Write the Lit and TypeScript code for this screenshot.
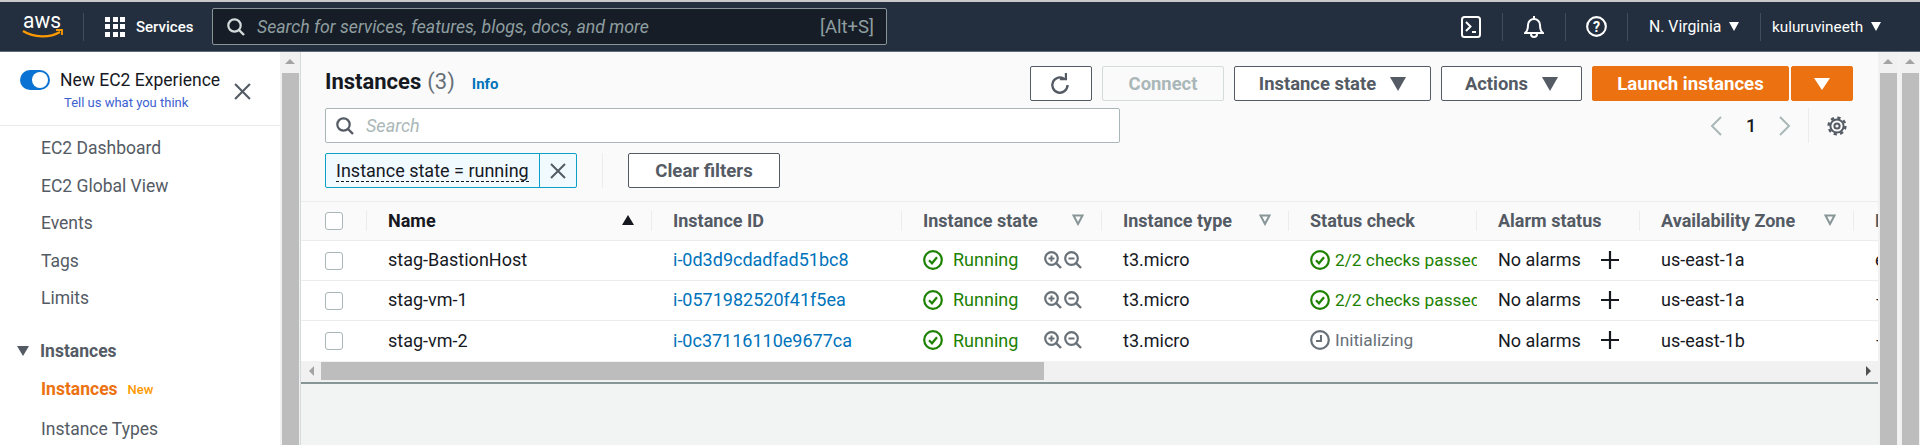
import { LitElement, html, css } from "lit";
import { customElement } from "lit/decorators.js";

const check = html`<svg class="st" viewBox="0 0 20 20"><circle cx="10" cy="10" r="8.8" fill="none" stroke="#1d8102" stroke-width="2.2"/><path d="M6 10.3l3 3 5-6" fill="none" stroke="#1d8102" stroke-width="2.2"/></svg>`;
const clock = html`<svg class="st" viewBox="0 0 20 20"><circle cx="10" cy="10" r="8.8" fill="none" stroke="#687078" stroke-width="2.2"/><path d="M11 5v6H6" fill="none" stroke="#687078" stroke-width="2"/></svg>`;
const zoomIn = html`<svg class="zi" viewBox="0 0 18 18"><circle cx="7.5" cy="7.5" r="6.3" fill="none" stroke="#687078" stroke-width="2.2"/><path d="M12 12l5 5" stroke="#687078" stroke-width="2.4"/><path d="M4.5 7.5h6M7.5 4.5v6" stroke="#687078" stroke-width="2"/></svg>`;
const zoomOut = html`<svg class="zi" viewBox="0 0 18 18"><circle cx="7.5" cy="7.5" r="6.3" fill="none" stroke="#687078" stroke-width="2.2"/><path d="M12 12l5 5" stroke="#687078" stroke-width="2.4"/><path d="M4.5 7.5h6" stroke="#687078" stroke-width="2"/></svg>`;
const plus = html`<svg class="plus" viewBox="0 0 20 20"><path d="M10 1v18M1 10h18" stroke="#16191f" stroke-width="2.2"/></svg>`;
const filt = html`<svg class="filt" viewBox="0 0 12 12"><path d="M1.5 1.5h9L6 10z" fill="none" stroke="#879596" stroke-width="2"/></svg>`;
const caret = (c: string, w: number, h: number) => html`<svg width=${w} height=${h} viewBox="0 0 16 14" preserveAspectRatio="none"><path d="M0 0h16L8 14z" fill=${c}/></svg>`;
const searchIcon = (c: string) => html`<svg width="18" height="18" viewBox="0 0 18 18"><circle cx="7.5" cy="7.5" r="6.2" fill="none" stroke=${c} stroke-width="2.2"/><path d="M12 12l5 5" stroke=${c} stroke-width="2.4"/></svg>`;
const cross = (s: number) => html`<svg width=${s} height=${s} viewBox="0 0 16 16"><path d="M1 1l14 14M15 1L1 15" stroke="#545b64" stroke-width="2"/></svg>`;

const rows = [
  { n: "stag-BastionHost", id: "i-0d3d9cdadfad51bc8", ok: true, az: "us-east-1a", last: "e" },
  { n: "stag-vm-1", id: "i-0571982520f41f5ea", ok: true, az: "us-east-1a", last: "–" },
  { n: "stag-vm-2", id: "i-0c37116110e9677ca", ok: false, az: "us-east-1b", last: "–" },
];
const nav = ["EC2 Dashboard", "EC2 Global View", "Events", "Tags", "Limits"];

@customElement("app-root")
export class AppRoot extends LitElement {
  static styles = css`
    :host { display: block; width: 1920px; height: 445px; overflow: hidden; font-family: Roboto, "Noto Sans", sans-serif; font-size: 18px; color: #16191f; background: #f2f3f3; }
    * { box-sizing: border-box; }
    .top { height: 52px; background: #232f3e; border-top: 2px solid #c9c9c9; border-bottom: 1px solid #5f6b7a; display: flex; align-items: center; color: #fff; }
    .logo { width: 83px; padding-left: 22px; display: flex; }
    .logo svg { overflow: visible; }
    .vsep { width: 1px; height: 28px; background: #414d5c; }
    .grid { margin-left: 21px; width: 20px; height: 20px; display: grid; grid-template-columns: repeat(3, 5px); grid-template-rows: repeat(3, 5px); gap: 2.5px; }
    .grid i { background: #fff; }
    .svc { margin-left: 11px; font-size: 15px; font-weight: 500; width: 76px; }
    .gs { width: 675px; height: 37px; margin-right: auto; background: #161d26; border: 1px solid #879596; border-radius: 2px; display: flex; align-items: center; padding: 0 12px 0 14px; color: #8f9ea0; font-size: 17.7px; }
    .gs em { margin-left: 12px; flex: 1; }
    .gs span { font-size: 18.5px; }
    .ti { width: 62.5px; height: 28px; display: flex; align-items: center; justify-content: center; border-right: 1px solid #414d5c; }
    .reg { display: flex; align-items: center; height: 28px; font-size: 15.8px; padding-left: 21px; gap: 8px; }
    .reg.a { width: 133px; border-right: 1px solid #414d5c; }
    .reg.b { width: 159px; padding-left: 11px; font-size: 15.3px; }
    .main { display: flex; height: 393px; }
    .side { width: 280px; background: #fff; flex: none; overflow: hidden; }
    .exp { height: 74px; border-bottom: 1px solid #eaeded; display: flex; padding: 18px 0 0 20px; }
    .tog { width: 30px; height: 20px; border-radius: 10px; background: #0972d3; padding: 2px; display: flex; justify-content: flex-end; flex: none; }
    .tog i { width: 16px; height: 16px; border-radius: 50%; background: #fff; }
    .exp b { font-weight: 400; font-size: 17.5px; line-height: 20px; color: #16191f; display: block; white-space: nowrap; }
    .exp a { font-size: 13px; line-height: 16px; color: #3d5fd0; display: block; margin: 5px 0 0 4px; white-space: nowrap; }
    .expt { margin-left: 10px; }
    .cl { margin: 13px 0 0 14px; flex: none; }
    .nav { padding: 3.5px 0 0 41px; color: #545b64; font-size: 17.5px; }
    .nav div { height: 37.5px; display: flex; align-items: center; white-space: nowrap; }
    .nav .sect { margin: 15px 0 0 -24px; font-weight: 700; gap: 11px; }
    .nav .act { color: #ec7211; font-weight: 700; gap: 10px; margin-top: 1px; }
    .nav .ty { margin-top: 2px; }
    .act small { font-size: 13px; font-weight: 500; color: #ff9900; }
    .vs { width: 20px; background: #f1f1f1; flex: none; display: flex; flex-direction: column; }
    .vs .tr { height: 21px; display: flex; justify-content: center; padding-top: 7px; flex: none; }
    .vs .tr i { width: 0; height: 0; border: 5px solid transparent; border-top: 0; border-bottom: 5px solid #a3a3a3; }
    .vs .th { flex: 1; background: #bdbdbd; margin: 0 1px 0 2px; }
    .vs2 { margin-left: 2px; }
    .content { width: 1578px; flex: none; border-left: 1px solid #d5dbdb; }
    .panel { background: #fafafa; padding: 14px 25px 0 24px; height: 149px; }
    .r1 { display: flex; align-items: center; height: 35px; }
    .tt { display: flex; align-items: baseline; font-size: 22px; font-weight: 700; margin-top: -4px; }
    .tt span { font-weight: 400; color: #687078; margin-left: 6px; }
    .tt a { font-size: 15px; color: #0073bb; font-weight: 700; margin-left: 17px; }
    .acts { display: flex; margin-left: auto; gap: 10px; }
    .btn { height: 35px; border: 1px solid #545b64; border-radius: 2px; background: #fff; color: #545b64; font-weight: 700; font-size: 18.4px; display: flex; align-items: center; justify-content: center; gap: 14px; white-space: nowrap; }
    .b-ref { width: 62px; }
    .b-con { width: 122px; border-color: #d5dbdb; color: #aab7b8; background: #fafafa; }
    .b-st { width: 197px; }
    .b-ac { width: 141px; }
    .split { display: flex; gap: 2px; }
    .b-la { width: 197px; background: #ec7211; border-color: #ec7211; color: #fff; font-size: 18.6px; }
    .b-dr { width: 62px; background: #ec7211; border-color: #ec7211; }
    .b-cl { width: 152px; font-size: 18.6px; }
    .r2 { display: flex; height: 35px; margin-top: 7px; align-items: center; }
    .sb { width: 795px; height: 35px; background: #fff; border: 1px solid #aab7b8; border-radius: 2px; display: flex; align-items: center; padding-left: 10px; color: #aab7b8; font-style: italic; gap: 12px; }
    .pg { margin-left: auto; margin-right: 6px; height: 35px; display: flex; align-items: center; }
    .pg b { width: 26px; font-weight: 500; text-align: center; margin: 0 15px 0 16px; }
    .pg .gsep { width: 1px; height: 35px; background: #eaeded; margin: 0 18px 0 17px; }
    .r3 { display: flex; height: 35px; margin-top: 10px; align-items: center; }
    .chip { height: 35px; width: 252px; background: #f1faff; border: 1px solid #0aa0c8; border-radius: 2px; display: flex; align-items: center; white-space: nowrap; }
    .chip span { padding-left: 10px; width: 213px; flex: none; }
    .chip u { text-decoration: none; border-bottom: 1px dashed #16191f; }
    .chip i { flex: 1; height: 100%; border-left: 1px solid #0aa0c8; display: flex; align-items: center; justify-content: center; }
    .fsep { width: 1px; height: 35px; background: #eaeded; margin: 0 25px; }
    .table { width: 1577px; overflow: hidden; }
    .tr-h, .tr-b { display: grid; grid-template-columns: 66px 285px 250px 200px 187px 188px 163px 214px 24px; }
    .tr-h { height: 40px; background: #fafafa; border-top: 1px solid #eaeded; border-bottom: 1px solid #eaeded; font-weight: 700; color: #545b64; }
    .tr-b { height: 40px; background: #fff; border-bottom: 1px solid #eaeded; }
    .tr-b:last-of-type { border-bottom: 0; }
    .c { display: flex; align-items: center; padding: 0 20px 2px 21px; white-space: nowrap; overflow: hidden; min-width: 0; }
    .tr-h .c { justify-content: space-between; padding-right: 18px; position: relative; }
    .tr-h .c::after { content: ""; position: absolute; right: 0; top: 9px; bottom: 9px; width: 1px; background: #eaeded; }
    .tr-h .c.nm { color: #16191f; }
    .tr-h .c.last { padding-right: 0; }
    .tr-h .c.last::after { display: none; }
    .c.c0 { padding: 0 0 0 24px; }
    .cb { width: 18px; height: 18px; border: 1px solid #aab7b8; border-radius: 3px; background: #fff; flex: none; }
    .link { color: #0073bb; }
    .g { color: #1d8102; }
    .gr { color: #687078; }
    .st { width: 20px; height: 20px; flex: none; margin-right: 10px; }
    .c.chk { padding-right: 0; font-size: 17.3px; }
    .chk .st { margin-right: 5px; }
    .zs { margin-left: auto; display: flex; gap: 2px; }
    .zi { width: 18px; height: 18px; flex: none; }
    .plus { width: 20px; height: 20px; margin-left: auto; flex: none; }
    .filt { width: 12px; height: 12px; flex: none; }
    .tri { flex: none; }
    .hs { height: 23px; background: #f1f1f1; display: flex; align-items: center; border-bottom: 2px solid #879596; padding-bottom: 1px; }
    .hs .ta { width: 20px; display: flex; justify-content: center; }
    .hs .th { width: 723px; height: 18px; background: #bdbdbd; }
    .hs .sp { flex: 1; }
    .tri-l { width: 0; height: 0; border: 5px solid transparent; border-left: 0; border-right: 5px solid #a3a3a3; }
    .tri-r { width: 0; height: 0; border: 5px solid transparent; border-right: 0; border-left: 5px solid #505050; }
  `;

  render() {
    return html`
      <div class="top">
        <div class="logo"><svg width="42" height="26" viewBox="0 0 42 26"><text x="1" y="14" font-family="Roboto" font-size="22" textLength="38" lengthAdjust="spacingAndGlyphs" fill="#fff">aws</text><path d="M1 17c11 7 27 7 37 1" fill="none" stroke="#f90" stroke-width="2.2"/><path d="M34 16h6v5" fill="none" stroke="#f90" stroke-width="1.8"/></svg></div>
        <div class="vsep"></div>
        <div class="grid">${Array(9).fill(0).map(() => html`<i></i>`)}</div>
        <div class="svc">Services</div>
        <div class="gs">${searchIcon("#d5dbdb")}<em>Search for services, features, blogs, docs, and more</em><span>[Alt+S]</span></div>
        <div class="ti"><svg width="20" height="24" viewBox="0 0 20 24"><rect x="1" y="2" width="18" height="20" rx="2.5" fill="none" stroke="#fff" stroke-width="2"/><path d="M5 7l4.5 4.5L5 16M11 17h4" fill="none" stroke="#fff" stroke-width="2"/></svg></div>
        <div class="ti"><svg width="20" height="24" viewBox="0 0 20 24"><path d="M1 18c3-2 3-5 3-8a6 6 0 0 1 12 0c0 3 0 6 3 8z" fill="none" stroke="#fff" stroke-width="2"/><path d="M7 19a3 3 0 0 0 6 0" fill="none" stroke="#fff" stroke-width="2"/><path d="M10 1v3" stroke="#fff" stroke-width="2"/></svg></div>
        <div class="ti"><svg width="21" height="21" viewBox="0 0 22 22"><circle cx="11" cy="11" r="9.8" fill="none" stroke="#fff" stroke-width="2.2"/><text x="11" y="16.5" text-anchor="middle" font-family="Roboto" font-weight="700" font-size="15" fill="#fff">?</text></svg></div>
        <div class="reg a">N. Virginia ${caret("#fff", 10, 9)}</div>
        <div class="reg b">kuluruvineeth ${caret("#fff", 10, 9)}</div>
      </div>
      <div class="main">
        <div class="side">
          <div class="exp">
            <div class="tog"><i></i></div>
            <div class="expt"><b>New EC2 Experience</b><a>Tell us what you think</a></div>
            <svg class="cl" width="17" height="17" viewBox="0 0 16 16"><path d="M1 1l14 14M15 1L1 15" stroke="#545b64" stroke-width="2"/></svg>
          </div>
          <div class="nav">
            ${nav.map((n) => html`<div>${n}</div>`)}
            <div class="sect">${caret("#545b64", 12, 10)} Instances</div>
            <div class="act">Instances <small>New</small></div>
            <div class="ty">Instance Types</div>
          </div>
        </div>
        <div class="vs"><div class="tr"><i></i></div><div class="th"></div></div>
        <div class="content">
          <div class="panel">
            <div class="r1">
              <div class="tt">Instances <span>(3)</span><a>Info</a></div>
              <div class="acts">
                <div class="btn b-ref"><svg width="24" height="24" viewBox="0 0 22 22"><path d="M17.5 11a7 7 0 1 1-2.6-5.5" fill="none" stroke="#545b64" stroke-width="2.2" transform="translate(-.5 1)"/><path d="M15.5 1v5.5H10" fill="none" stroke="#545b64" stroke-width="2"/></svg></div>
                <div class="btn b-con">Connect</div>
                <div class="btn b-st">Instance state ${caret("#545b64", 16, 14)}</div>
                <div class="btn b-ac">Actions ${caret("#545b64", 16, 14)}</div>
                <div class="split"><div class="btn b-la">Launch instances</div><div class="btn b-dr">${caret("#fff", 16, 12)}</div></div>
              </div>
            </div>
            <div class="r2">
              <div class="sb">${searchIcon("#545b64")} Search</div>
              <div class="pg">
                <svg width="12" height="20" viewBox="0 0 12 20"><path d="M11 1L2 10l9 9" fill="none" stroke="#aab7b8" stroke-width="2"/></svg>
                <b>1</b>
                <svg width="12" height="20" viewBox="0 0 12 20"><path d="M1 1l9 9-9 9" fill="none" stroke="#aab7b8" stroke-width="2"/></svg>
                <div class="gsep"></div>
                <svg width="20" height="20" viewBox="0 0 20 20"><circle cx="10" cy="10" r="6.6" fill="none" stroke="#545b64" stroke-width="2"/><circle cx="10" cy="10" r="8.4" fill="none" stroke="#545b64" stroke-width="2.4" stroke-dasharray="3.3 3.3"/><circle cx="10" cy="10" r="2.6" fill="none" stroke="#545b64" stroke-width="2"/></svg>
              </div>
            </div>
            <div class="r3">
              <div class="chip"><span><u>Instance state = running</u></span><i>${cross(16)}</i></div>
              <div class="fsep"></div>
              <div class="btn b-cl">Clear filters</div>
            </div>
          </div>
          <div class="table">
            <div class="tr-h">
              <div class="c c0"><div class="cb"></div></div>
              <div class="c nm">Name <svg class="tri" width="12" height="10" viewBox="0 0 12 10"><path d="M6 0l6 10H0z" fill="#16191f"/></svg></div>
              <div class="c">Instance ID</div>
              <div class="c">Instance state ${filt}</div>
              <div class="c">Instance type ${filt}</div>
              <div class="c">Status check</div>
              <div class="c">Alarm status</div>
              <div class="c">Availability Zone ${filt}</div>
              <div class="c last">P</div>
            </div>
            ${rows.map((r) => html`
              <div class="tr-b">
                <div class="c c0"><div class="cb"></div></div>
                <div class="c">${r.n}</div>
                <div class="c link">${r.id}</div>
                <div class="c g">${check}Running<span class="zs">${zoomIn}${zoomOut}</span></div>
                <div class="c">t3.micro</div>
                <div class="c chk ${r.ok ? "g" : "gr"}">${r.ok ? check : clock}${r.ok ? "2/2 checks passed" : "Initializing"}</div>
                <div class="c">No alarms${plus}</div>
                <div class="c">${r.az}</div>
                <div class="c">${r.last}</div>
              </div>`)}
          </div>
          <div class="hs"><div class="ta"><div class="tri-l"></div></div><div class="th"></div><div class="sp"></div><div class="ta"><div class="tri-r"></div></div></div>
        </div>
        <div class="vs"><div class="tr"><i></i></div><div class="th"></div></div>
        <div class="vs vs2"><div class="tr"><i></i></div><div class="th"></div></div>
      </div>`;
  }
}
